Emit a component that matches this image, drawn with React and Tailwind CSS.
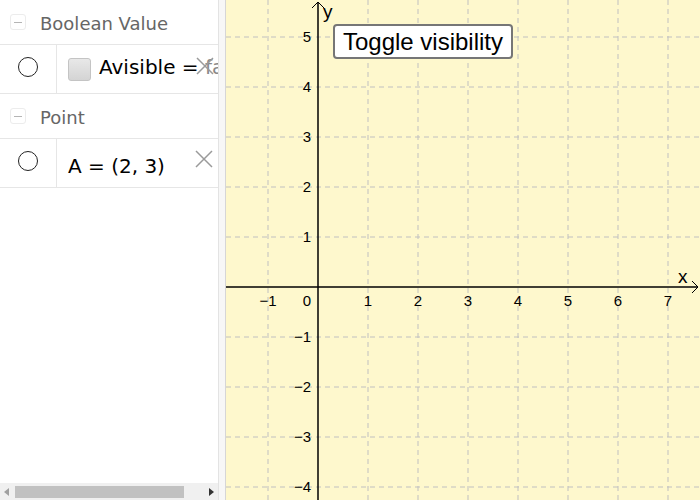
import React from 'react';

const UNIT = 50;
const OX = 92; // y axis, relative to graphics view
const OY = 287; // x axis
const W = 474;
const H = 500;

function Grid() {
    const xs = [];
    for (let k = -1; k <= 7; k++) if (k !== 0) xs.push(k);
    const ys = [];
    for (let k = -4; k <= 5; k++) if (k !== 0) ys.push(k);
    return (
        <svg className="absolute inset-0" width={W} height={H} viewBox={`0 0 ${W} ${H}`}>
            {xs.map((k) => (
                <line key={'vx' + k} x1={OX + k * UNIT} y1={0} x2={OX + k * UNIT} y2={H} stroke="#c0c0c0" strokeWidth="1" strokeDasharray="5 4" />
            ))}
            {ys.map((k) => (
                <line key={'hy' + k} x1={0} y1={OY - k * UNIT} x2={W} y2={OY - k * UNIT} stroke="#c0c0c0" strokeWidth="1" strokeDasharray="5 4" />
            ))}
            {/* axes */}
            <line x1={0} y1={OY} x2={W - 2} y2={OY} stroke="#000" strokeWidth="1.5" />
            <line x1={OX} y1={2} x2={OX} y2={H} stroke="#000" strokeWidth="1.5" />
            <path d={`M${W - 8} ${OY - 6} L${W - 2} ${OY} L${W - 8} ${OY + 6}`} fill="none" stroke="#000" strokeWidth="1" />
            <path d={`M${OX - 6} 8 L${OX} 2 L${OX + 6} 8`} fill="none" stroke="#000" strokeWidth="1" />
            <g fontFamily="'Liberation Sans', Arial, sans-serif" fontSize="15" fill="#000">
                {xs.map((k) => (
                    <text key={'lx' + k} x={OX + k * UNIT} y={OY + 19} textAnchor="middle">
                        {k < 0 ? '\u2212' + -k : k}
                    </text>
                ))}
                <text x={OX - 7} y={OY + 19} textAnchor="end">0</text>
                {ys.map((k) => (
                    <text key={'ly' + k} x={OX - 7} y={OY - k * UNIT + 5} textAnchor="end">
                        {k < 0 ? '\u2212' + -k : k}
                    </text>
                ))}
            </g>
            <text x={452} y={283} fontFamily="'Liberation Sans', Arial, sans-serif" fontSize="19" fill="#000">x</text>
            <text x={97} y={18} fontFamily="'Liberation Sans', Arial, sans-serif" fontSize="19" fill="#000">y</text>
        </svg>
    );
}

function Collapse() {
    return (
        <div className="w-[16px] h-[16px] rounded-[3px] border border-[#ececec] flex items-center justify-center">
            <div className="w-[8px] h-[1px] bg-[#b5b5b5]" />
        </div>
    );
}

function Header({ title }) {
    return (
        <div className="h-[45px] flex items-center gap-[14px] pl-[10px] border-b border-[#e6e6e6]">
            <Collapse />
            <span className="text-[18px] text-[#666] font-['DejaVu_Sans',sans-serif] mt-[3px]">{title}</span>
        </div>
    );
}

function Radio() {
    return (
        <div className="w-[57px] shrink-0 border-r border-[#e6e6e6] flex items-center justify-center">
            <div className="w-[20px] h-[20px] rounded-full border-[1.5px] border-[#222] mt-[-4px]" />
        </div>
    );
}

function Cross({ className }) {
    return (
        <svg className={className} width="20" height="20" viewBox="0 0 20 20">
            <path d="M2 2 L18 18 M18 2 L2 18" stroke="#9a9a9a" strokeWidth="1.5" />
        </svg>
    );
}

export default function App() {
    return (
        <div className="w-[700px] h-[500px] flex bg-white overflow-hidden">
            {/* Algebra view */}
            <div className="w-[218px] shrink-0 flex flex-col relative">
                <div className="flex-1 overflow-hidden">
                    <Header title="Boolean Value" />
                    <div className="h-[49px] flex border-b border-[#e6e6e6] relative overflow-hidden">
                        <Radio />
                        <div className="flex items-center pl-[11px] gap-[8px] whitespace-nowrap">
                            <div className="w-[23px] h-[23px] rounded-[3px] border border-[#c4c4c4] bg-gradient-to-b from-[#e8e8e8] to-[#d4d4d4] shrink-0" />
                            <span className="text-[20px] text-black font-['DejaVu_Sans',sans-serif] mt-[-4px]">
                                Avisible = <span className="text-[#888]">false</span>
                            </span>
                        </div>
                        <Cross className="absolute left-[195px] top-[11px]" />
                    </div>
                    <Header title="Point" />
                    <div className="h-[49px] flex border-b border-[#e6e6e6] relative">
                        <Radio />
                        <div className="flex items-center pl-[11px]">
                            <span className="text-[20px] text-black font-['DejaVu_Sans',sans-serif] mt-[6px]">A = (2, 3)</span>
                        </div>
                        <Cross className="absolute left-[194px] top-[10px]" />
                    </div>
                </div>
                {/* horizontal scrollbar */}
                <div className="h-[17px] bg-[#f0f0f0] flex items-center px-[4px] gap-[4px]">
                    <div className="w-0 h-0 border-y-[4px] border-y-transparent border-r-[5px] border-r-[#a0a0a0]" />
                    <div className="w-[169px] h-[12px] bg-[#c1c1c1] ml-[2px]" />
                    <div className="flex-1" />
                    <div className="w-0 h-0 border-y-[4px] border-y-transparent border-l-[5px] border-l-[#333]" />
                </div>
            </div>
            {/* splitter */}
            <div className="w-[8px] shrink-0 bg-[#f7f7f7] border-l border-[#e3e3e3] border-r border-r-[#d6d6d6]" />
            {/* Graphics view */}
            <div className="flex-1 relative bg-[#fef8cd]">
                <Grid />
                <button className="absolute left-[107px] top-[24px] w-[180px] h-[35px] bg-white border-2 border-[#767676] rounded-[4px] text-[24px] text-black font-['Liberation_Sans',Arial,sans-serif] leading-none flex items-center justify-center">
                    Toggle visibility
                </button>
            </div>
        </div>
    );
}
